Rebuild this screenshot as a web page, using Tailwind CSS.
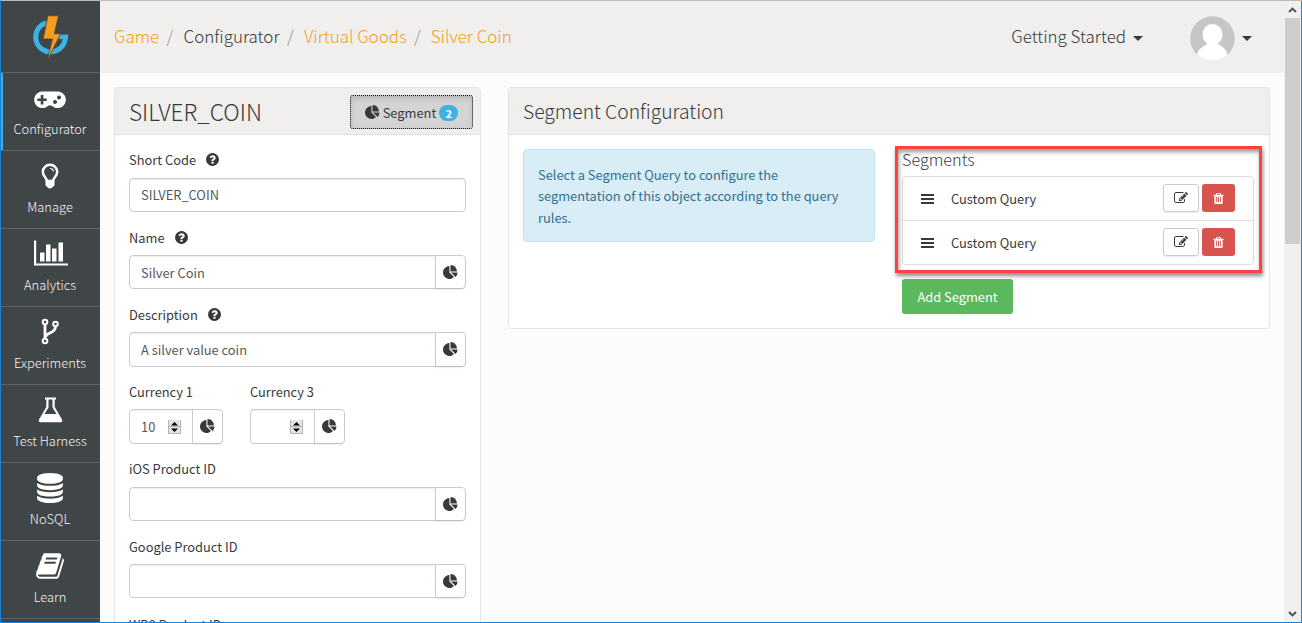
<!DOCTYPE html>
<html lang="en">
<head>
<meta charset="utf-8">
<title>Configurator</title>
<script src="https://cdn.jsdelivr.net/npm/@tailwindcss/browser@4"></script>
</head>
<body class="w-[1302px] h-[623px] overflow-hidden bg-[#fcfcfa] font-['Noto_Sans_CJK_SC','Noto_Sans',sans-serif] text-[12.850px] leading-[21px] text-[#373a3c]">
<svg class="hidden">
  <symbol id="pie" viewBox="0 0 1792 1792"><path d="M768 890l546 546q-106 108-247.500 168t-298.500 60q-209 0-385.500-103t-279.500-279.500-103-385.500 103-385.500 279.500-279.500 385.500-103v762zm187 6h773q0 157-60 298.500t-168 247.500zm709-128h-768v-768q209 0 385.500 103t279.500 279.500 103 385.500z"/></symbol>
  <symbol id="help" viewBox="0 0 1792 1792"><path d="M1024 1376v-192q0-14-9-23t-23-9h-192q-14 0-23 9t-9 23v192q0 14 9 23t23 9h192q14 0 23-9t9-23zm256-672q0-88-55.500-163t-138.500-116-170-41q-243 0-371 213-15 24 8 42l132 100q7 6 19 6 16 0 25-12 53-68 86-92 34-24 86-24 48 0 85.500 26t37.500 59q0 38-20 61t-68 45q-63 28-115.500 86.500t-52.500 125.500v36q0 14 9 23t23 9h192q14 0 23-9t9-23q0-19 21.500-49.500t54.500-49.500q32-18 49-28.500t46-35 44.500-48 28-60.500 12.500-81zm384 192q0 209-103 385.500t-279.500 279.500-385.500 103-385.500-103-279.500-279.500-103-385.500 103-385.500 279.500-279.500 385.500-103 385.500 103 279.500 279.500 103 385.500z"/></symbol>
  <symbol id="trash" viewBox="0 0 1792 1792"><path d="M704 1376v-704q0-14-9-23t-23-9h-64q-14 0-23 9t-9 23v704q0 14 9 23t23 9h64q14 0 23-9t9-23zm256 0v-704q0-14-9-23t-23-9h-64q-14 0-23 9t-9 23v704q0 14 9 23t23 9h64q14 0 23-9t9-23zm256 0v-704q0-14-9-23t-23-9h-64q-14 0-23 9t-9 23v704q0 14 9 23t23 9h64q14 0 23-9t9-23zm-544-992h448l-48-117q-7-9-17-11h-317q-10 2-17 11zm928 32v64q0 14-9 23t-23 9h-96v948q0 83-47 143.500t-113 60.500h-832q-66 0-113-58.500t-47-141.500v-952h-96q-14 0-23-9t-9-23v-64q0-14 9-23t23-9h309l70-167q15-37 54-63t79-26h320q40 0 79 26t54 63l70 167h309q14 0 23 9t9 23z"/></symbol>
  <symbol id="edit" viewBox="0 0 1792 1792"><path d="M888 1184l116-116-152-152-116 116v56h96v96h56zm440-720q-16-16-33 1l-350 350q-17 17-1 33t33-1l350-350q17-17 1-33zm80 594v190q0 119-84.500 203.500t-203.500 84.500h-832q-119 0-203.500-84.500t-84.500-203.500v-832q0-119 84.500-203.500t203.500-84.500h832q63 0 117 25 15 7 18 23 3 17-9 29l-49 49q-14 14-32 8-23-6-45-6h-832q-66 0-113 47t-47 113v832q0 66 47 113t113 47h832q66 0 113-47t47-113v-126q0-13 9-22l64-64q15-15 35-7t20 29zm-96-738l288 288-672 672h-288v-288zm444 132l-92 92-288-288 92-92q28-28 68-28t68 28l152 152q28 28 28 68t-28 68z"/></symbol>
  <symbol id="spin" viewBox="0 0 13 14"><path fill="#e4e4e4" d="M0 0h13v14H0z"/><path fill="none" stroke="#b5b5b5" d="M.5 0v14M12.500 0v14M0 13.500h13M0 6.500h13"/><path fill="#000" d="M3 5.500h7L6.500 2zM3 8.500h7L6.500 12z"/></symbol>
</svg>
<div class="relative flex h-full w-full border-t border-l border-b border-t-[#bcbcbc] border-l-[#1883d7] border-b-[#1883d7]">

  <!-- sidebar -->
  <nav class="flex w-[99px] shrink-0 flex-col overflow-hidden bg-[#404547] pr-px text-center text-[12.900px] text-[#f4f4f4] font-light">
    <div class="-mr-px flex h-[71px] shrink-0 justify-center">
      <svg class="h-[71px] w-[99px]" viewBox="1 1 99 71"><path d="M46 22.900A14.800 14.800 0 1 0 65.300 36.500" fill="none" stroke="#3eb1e5" stroke-width="5"/><path d="M59 36.800h9.100" stroke="#3eb1e5" stroke-width="4.500"/><path d="M47.800 15.800h10.700L54.300 33.800h6.400L51.500 52 47.300 60.500 49 52.500 52.500 39H43.200z" fill="#f99b1d" stroke="#404547" stroke-width=".8"/></svg>
    </div>
    <a class="-mr-px flex h-[78px] shrink-0 flex-col items-center border-t border-[#5f6365] pr-px shadow-[inset_2px_0_0_#3eb1e5]">
      <svg class="mt-[10px] h-8 w-9" viewBox="0 -1 36 32"><path fill="#fff" fill-rule="evenodd" d="M10 7.500h16a8.300 8.300 0 1 1-6.500 14h-3A8.300 8.300 0 1 1 10 7.500zM8.700 11v3.400H5.300v2.700h3.400v3.400h2.700v-3.400h3.400v-2.700h-3.400V11zM23 16a2 2 0 1 0 .01 0zM27 11.500a2 2 0 1 0 .01 0z"/></svg>
      <span class="mt-[3px]">Configurator</span></a>
    <a class="-mr-px flex h-[78px] shrink-0 flex-col items-center border-t border-[#5f6365] pr-px">
      <svg class="mt-[10px] h-8 w-9" viewBox="0 0 36 32"><path fill="none" stroke="#fff" stroke-width="2.500" d="M15 20c0-3-4.200-5-4.200-9a7.200 7.200 0 0 1 14.400 0c0 4-4.200 6-4.200 9z"/><path d="M18 7.500q3 0 3.500 2.800" fill="none" stroke="#fff" stroke-width="1.200"/><path fill="#fff" d="M13.500 19.500h9v5l-2.300 2q-2.200 2-4.400 0l-2.300-2z"/></svg>
      <span class="mt-[3px]">Manage</span></a>
    <a class="-mr-px flex h-[78px] shrink-0 flex-col items-center border-t border-[#5f6365] pr-px">
      <svg class="mt-[10px] h-8 w-9" viewBox="0 0 36 32"><path fill="#fff" d="M2 1h2.200v23H36v2H2zM8 13h4.500v9H8zM14 5h4.500v17H14zM20 9h4.500v13H20zM26.500 3H31v19h-4.500z" transform="translate(0 .5)"/></svg>
      <span class="mt-[3px]">Analytics</span></a>
    <a class="-mr-px flex h-[78px] shrink-0 flex-col items-center border-t border-[#5f6365] pr-px">
      <svg class="mt-[10px] h-8 w-9" viewBox="0 0 36 32"><g fill="none" stroke="#fff" stroke-width="2"><circle cx="13" cy="5" r="2.300"/><circle cx="23.500" cy="7" r="2.300"/><circle cx="13" cy="24" r="2.300"/><path stroke-width="2.800" d="M13 7.500v14M23.500 9.500c0 7.500-9.500 5.500-10 10.500"/></g></svg>
      <span class="mt-[3px]">Experiments</span></a>
    <a class="-mr-px flex h-[78px] shrink-0 flex-col items-center border-t border-[#5f6365] pr-px">
      <svg class="mt-[10px] h-8 w-9" viewBox="0 0 36 32"><path fill="#fff" fill-rule="evenodd" d="M13 2.500h11v2h-1.300v7.500L30 24.500q1 2.500-1.500 2.700h-20Q6 27 7 24.500L14.300 12V4.500H13zM16.500 4.500v8l-4 6.500h12l-4-6.500v-8z"/></svg>
      <span class="mt-[3px]">Test Harness</span></a>
    <a class="-mr-px flex h-[78px] shrink-0 flex-col items-center border-t border-[#5f6365] pr-px">
      <svg class="mt-[10px] mb-[2px] size-[30px]" viewBox="0 0 1792 1792"><path fill="#fff" d="M896 768q237 0 443-43t325-127v170q0 69-103 128t-280 93.500-385 34.500-385-34.500-280-93.500-103-128v-170q119 84 325 127t443 43zm0 768q237 0 443-43t325-127v170q0 69-103 128t-280 93.500-385 34.500-385-34.500-280-93.500-103-128v-170q119 84 325 127t443 43zm0-384q237 0 443-43t325-127v170q0 69-103 128t-280 93.500-385 34.500-385-34.500-280-93.500-103-128v-170q119 84 325 127t443 43zm0-1152q208 0 385 34.500t280 93.500 103 128v128q0 69-103 128t-280 93.500-385 34.500-385-34.500-280-93.500-103-128v-128q0-69 103-128t280-93.500 385-34.500z"/></svg>
      <span class="mt-[3px]">NoSQL</span></a>
    <a class="-mr-px flex h-[78px] shrink-0 flex-col items-center border-t border-[#5f6365] pr-px">
      <svg class="mt-[10px] mb-[2px] size-[30px]" viewBox="0 0 1792 1792"><path fill="#fff" d="M1703 478q40 57 18 129l-275 906q-19 64-76.500 107.500t-122.500 43.500h-923q-77 0-148.500-53.500t-99.500-131.500q-24-67-2-127 0-4 3-27t4-37q1-8-3-21.500t-3-19.500q2-11 8-21t16.500-23.500 16.500-23.500q23-38 45-91.500t30-91.500q3-10 .5-30t-.5-28q3-11 17-28t17-23q21-36 42-92t25-90q1-9-2.500-32t.5-28q4-13 22-30.500t22-22.500q19-26 42.500-84.500t27.500-96.500q1-8-3-25.500t-2-26.500q2-8 9-18t18-23 17-21q8-12 16.500-30.500t15-35 16-36 19.500-32 26.500-23.500 36-11.500 47.500 5.500l-1 3q38-9 51-9h761q74 0 114 56t18 130l-274 906q-36 119-71.500 153.500t-128.500 34.500h-869q-27 0-38 15-11 16-1 43 24 70 144 70h923q29 0 56-15.500t35-41.500l300-987q7-22 5-57 38 15 59 43zm-1064 2q-4 13 2 22.500t20 9.500h608q13 0 25.500-9.500t16.500-22.500l21-64q4-13-2-22.500t-20-9.500h-608q-13 0-25.500 9.500t-16.500 22.500zm-83 256q-4 13 2 22.500t20 9.500h608q13 0 25.500-9.500t16.500-22.500l21-64q4-13-2-22.500t-20-9.500h-608q-13 0-25.500 9.500t-16.500 22.500z"/></svg>
      <span class="mt-[3px]">Learn</span></a>
    <div class="-mr-px h-[78px] shrink-0 border-t border-[#5f6365]"></div>
  </nav>

  <div class="flex w-[1184px] shrink-0 flex-col overflow-hidden">
    <header class="flex h-[72px] shrink-0 items-center bg-[#f0efee] pl-[14px] text-[16.950px] font-light">
      <div class="flex flex-1 whitespace-pre pb-[4px] text-[#f99b1d]"><a>Game</a><span class="pr-[10.300px] pl-[7.500px] text-[#8d9499]">/</span><a class="text-[#373a3c]">Configurator</a><span class="pr-[10.300px] pl-[7.500px] text-[#8d9499]">/</span><a>Virtual Goods</a><span class="pr-[10px] pl-[7.500px] text-[#8d9499]">/</span><a>Silver Coin</a></div>
      <span class="pb-[4px] whitespace-nowrap">Getting Started</span>
      <svg class="mt-[3px] ml-[7px] h-[5px] w-[10px]" viewBox="0 0 10 5"><path d="M0 0h10L5 5z" fill="#373a3c"/></svg>
      <svg class="ml-[47px] mt-[3px] size-[45px]" viewBox="0 0 45 45"><defs><clipPath id="av"><circle cx="22.500" cy="22.500" r="22.300"/></clipPath></defs><g clip-path="url(#av)"><path fill="#c6c6c6" d="M0 0h45v45H0z"/><g fill="#fff"><ellipse cx="22.500" cy="18.500" rx="10" ry="10.500"/><path d="M17 26h11v2q9 4 10.500 14V46H6V42q1.500-10 11-14z"/></g></g></svg>
      <svg class="mt-[3px] mr-[32px] ml-[7px] h-[5px] w-[10px]" viewBox="0 0 10 5"><path d="M0 0h10L5 5z" fill="#373a3c"/></svg>
    </header>

    <main class="flex flex-1 items-start gap-[27px] px-[14px] pt-[14px]">
      <section class="h-[600px] w-[367px] shrink-0 rounded border border-[#e4e4e4] bg-white">
        <div class="flex h-[47px] items-center justify-between border-b border-[#e0e0e0] bg-[#f0efee] pr-[7px] pl-[14px]">
          <h2 class="text-[22.600px] font-light">SILVER_COIN</h2>
          <button class="mt-[2px] flex h-[34px] w-[123px] items-center justify-center rounded-[3px] border border-dotted border-black bg-[#d4d4d4] shadow-[inset_0_3px_5px_rgba(0,0,0,0.125)]"><svg class="mr-[3px] size-[15px]" fill="#373a3c"><use href="#pie"/></svg><span class="pt-px">Segment</span><span class="mt-px ml-[3px] h-4 w-[19px] rounded-full bg-[#3eb1e5] text-[11px] leading-4 font-bold text-white">2</span></button>
        </div>
        <div class="px-[14px] pt-[14px]">
          <div class="h-[78.400px]"><label class="flex h-[29px] items-start">Short Code<svg class="mt-[3px] ml-[9px] size-[15px]" fill="#373a3c"><use href="#help"/></svg></label>
            <div class="flex h-[34.400px] items-center rounded border border-[#ccc] px-[11px] pb-px text-[#55595c] shadow-[inset_0_1px_1px_rgba(0,0,0,0.075)]">SILVER_COIN</div></div>
          <div class="h-[77.200px]"><label class="flex h-[27.600px] items-start">Name<svg class="mt-[3px] ml-[9px] size-[15px]" fill="#373a3c"><use href="#help"/></svg></label>
            <div class="flex h-[34.400px] rounded border border-[#ccc] shadow-[inset_0_1px_1px_rgba(0,0,0,0.075)]"><div class="flex flex-1 items-center px-[11px] pt-px text-[#55595c]">Silver Coin</div><div class="flex w-[30px] items-center justify-center rounded-r border-l border-[#ccc] bg-white shadow-[0_2px_2px_rgba(0,0,0,0.07)]"><svg class="size-[15px]" fill="#373a3c"><use href="#pie"/></svg></div></div></div>
          <div class="h-[77.200px]"><label class="flex h-[27.600px] items-start leading-[19px]">Description<svg class="mt-[2px] ml-[9px] size-[15px]" fill="#373a3c"><use href="#help"/></svg></label>
            <div class="flex h-[34.400px] rounded border border-[#ccc] shadow-[inset_0_1px_1px_rgba(0,0,0,0.075)]"><div class="flex flex-1 items-center px-[11px] pt-px text-[#55595c]">A silver value coin</div><div class="flex w-[30px] items-center justify-center rounded-r border-l border-[#ccc] bg-white shadow-[0_2px_2px_rgba(0,0,0,0.07)]"><svg class="size-[15px]" fill="#373a3c"><use href="#pie"/></svg></div></div></div>
          <div class="flex h-[77.200px] gap-[27px]">
            <div class="w-[94px]"><label class="flex h-[27.600px] items-start leading-[19px] whitespace-nowrap">Currency 1</label>
              <div class="flex h-[35px] rounded border border-[#ccc] shadow-[inset_0_1px_1px_rgba(0,0,0,0.075)]"><div class="flex flex-1 items-center justify-between pr-[11px] pl-[11px] text-[#55595c]">10<svg class="h-[14px] w-[13px]"><use href="#spin"/></svg></div><div class="flex w-[30px] items-center justify-center rounded-r border-l border-[#ccc] bg-white shadow-[0_2px_2px_rgba(0,0,0,0.07)]"><svg class="size-[15px]" fill="#373a3c"><use href="#pie"/></svg></div></div></div>
            <div class="w-[95px]"><label class="flex h-[27.600px] items-start leading-[19px] whitespace-nowrap">Currency 3</label>
              <div class="flex h-[35px] rounded border border-[#ccc] shadow-[inset_0_1px_1px_rgba(0,0,0,0.075)]"><div class="flex flex-1 items-center justify-end pr-[11px]"><svg class="h-[14px] w-[13px]"><use href="#spin"/></svg></div><div class="flex w-[30px] items-center justify-center rounded-r border-l border-[#ccc] bg-white shadow-[0_2px_2px_rgba(0,0,0,0.07)]"><svg class="size-[15px]" fill="#373a3c"><use href="#pie"/></svg></div></div></div>
          </div>
          <div class="h-[77.500px]"><label class="flex h-[28px] items-start leading-[19px]">iOS Product ID</label>
            <div class="flex h-[34.400px] rounded border border-[#ccc] shadow-[inset_0_1px_1px_rgba(0,0,0,0.075)]"><div class="flex-1"></div><div class="flex w-[30px] items-center justify-center rounded-r border-l border-[#ccc] bg-white shadow-[0_2px_2px_rgba(0,0,0,0.07)]"><svg class="size-[15px]" fill="#373a3c"><use href="#pie"/></svg></div></div></div>
          <div class="h-[77.200px]"><label class="flex h-[27.600px] items-start">Google Product ID</label>
            <div class="flex h-[34.400px] rounded border border-[#ccc] shadow-[inset_0_1px_1px_rgba(0,0,0,0.075)]"><div class="flex-1"></div><div class="flex w-[30px] items-center justify-center rounded-r border-l border-[#ccc] bg-white shadow-[0_2px_2px_rgba(0,0,0,0.07)]"><svg class="size-[15px]" fill="#373a3c"><use href="#pie"/></svg></div></div></div>
          <label class="block">WP8 Product ID</label>
        </div>
      </section>

      <section class="h-[242px] w-[762px] shrink-0 rounded border border-[#e4e4e4] bg-white">
        <div class="flex h-[47px] items-center border-b border-[#e0e0e0] bg-[#f0efee] pl-[14px]"><h2 class="text-[19.300px] font-light">Segment Configuration</h2></div>
        <div class="flex items-start pt-[14px] pl-[14px]">
          <div class="h-[93px] w-[352px] shrink-0 rounded border border-[#bce4f3] bg-[#d9edf7] pt-[14px] pl-[14px] leading-[21.400px] text-[#31708f]">Select a Segment Query to configure the<br>segmentation of this object according to the query<br>rules.</div>
          <div class="relative ml-[27px] w-[352px]">
            <h3 class="h-[27px] text-[16.200px] leading-[21px] font-light">Segments</h3>
            <ul class="rounded border border-[#ddd]">
              <li class="flex h-[43px] items-center pr-[18px] pb-px pl-[18px]"><svg class="mt-px mr-[17px] h-[12px] w-[13px]" viewBox="0 0 13 12"><path d="M0 2h13M0 6h13M0 10h13" stroke="#373a3c" stroke-width="2"/></svg><span class="flex-1 pt-px">Custom Query</span><span class="mr-[3px] flex h-[28px] w-[36px] items-center justify-center rounded-[3px] border border-[#ccc] shadow-[0_1px_1px_rgba(0,0,0,0.08)]"><svg class="size-[14px]" fill="#373a3c"><use href="#edit"/></svg></span><span class="flex h-[28px] w-[33px] items-center justify-center rounded-[3px] bg-[#d9534f]"><svg class="size-[13px]" fill="#fff"><use href="#trash"/></svg></span></li>
              <li class="flex h-[44px] items-center border-t border-[#ddd] pr-[18px] pb-px pl-[18px]"><svg class="mt-px mr-[17px] h-[12px] w-[13px]" viewBox="0 0 13 12"><path d="M0 2h13M0 6h13M0 10h13" stroke="#373a3c" stroke-width="2"/></svg><span class="flex-1 pt-px">Custom Query</span><span class="mr-[3px] flex h-[28px] w-[36px] items-center justify-center rounded-[3px] border border-[#ccc] shadow-[0_1px_1px_rgba(0,0,0,0.08)]"><svg class="size-[14px]" fill="#373a3c"><use href="#edit"/></svg></span><span class="flex h-[28px] w-[33px] items-center justify-center rounded-[3px] bg-[#d9534f]"><svg class="size-[13px]" fill="#fff"><use href="#trash"/></svg></span></li>
            </ul>
            <button class="mt-[14px] h-[35px] w-[111px] rounded-[3px] bg-[#5cb85c] pb-px text-white">Add Segment</button>
            <div class="absolute -top-[3px] -left-[7px] h-[127px] w-[367px] border-[3px] border-[#fc4242] shadow-[1px_3px_4px_rgba(0,0,0,0.45),inset_1px_3px_4px_rgba(0,0,0,0.4)]"></div>
          </div>
        </div>
      </section>
    </main>
  </div>

  <!-- window scrollbar -->
  <div class="flex w-[18px] shrink-0 flex-col border-r border-[#1883d7] bg-[#f0f0f0]">
    <div class="flex h-[17px] items-center justify-center"><svg class="h-[6px] w-[9px]" viewBox="0 0 9 6"><path d="M1 5l3.500-3.500L8 5" fill="none" stroke="#505050" stroke-width="1.800"/></svg></div>
    <div class="mr-px ml-px h-[226px] bg-[#cdcdcd]"></div>
    <div class="flex-1"></div>
    <div class="flex h-[17px] items-center justify-center"><svg class="h-[6px] w-[9px]" viewBox="0 0 9 6"><path d="M1 1l3.500 3.500L8 1" fill="none" stroke="#505050" stroke-width="1.800"/></svg></div>
  </div>
</div>
</body>
</html>
